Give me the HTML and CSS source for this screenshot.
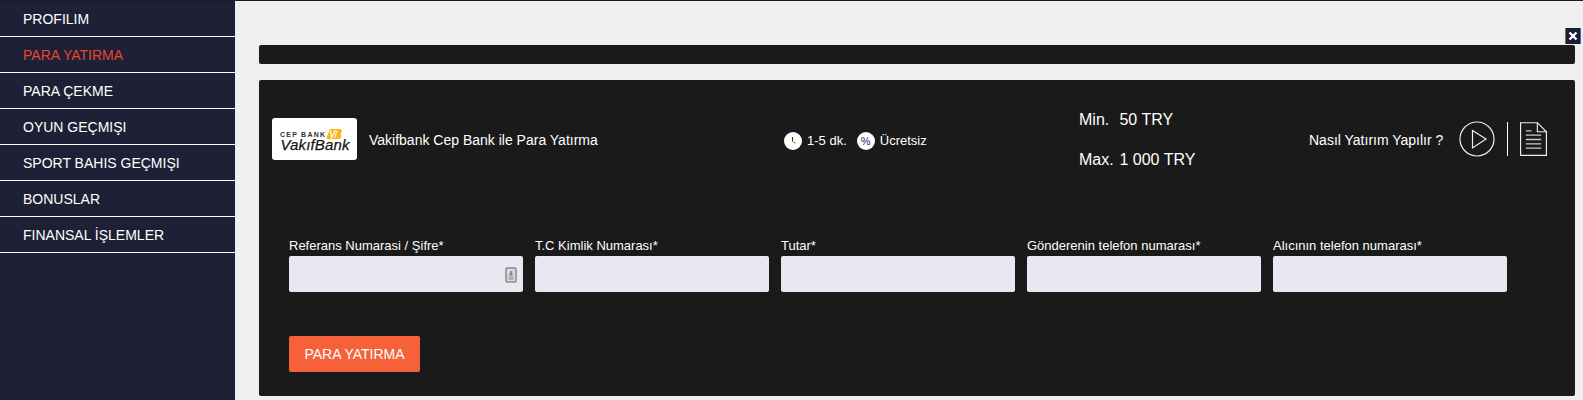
FILE: index.html
```html
<!DOCTYPE html>
<html lang="tr">
<head>
<meta charset="utf-8">
<title>Para Yatırma</title>
<link rel="stylesheet" href="styles.css">
</head>
<body>
<div class="layout">
  <nav class="sidebar">
    <a class="nav-item">PROFILIM</a>
    <a class="nav-item active">PARA YATIRMA</a>
    <a class="nav-item">PARA ÇEKME</a>
    <a class="nav-item">OYUN GEÇMIŞI</a>
    <a class="nav-item">SPORT BAHIS GEÇMIŞI</a>
    <a class="nav-item">BONUSLAR</a>
    <a class="nav-item">FINANSAL İŞLEMLER</a>
  </nav>
  <main class="content">
    <div class="close-btn">
      <svg viewBox="0 0 14 16" width="14" height="16"><path d="M3.500 4.500l7 7M10.500 4.500l-7 7" stroke="#fff" stroke-width="2.400" fill="none"/></svg>
    </div>
    <div class="strip"></div>
    <section class="panel">
      <header class="method">
        <div class="logo">
          <svg viewBox="0 0 85 42" width="85" height="42">
            <text x="8" y="19" class="logo-cep" textLength="45">CEP BANK</text>
            <path d="M54 21L58 11H69L70 13.500L68.500 16L69.500 18L68 21Z" fill="#f6b81a"/>
            <path d="M58.500 12.500L59.500 19.500L63.500 12" stroke="#fff" stroke-width="1.200" fill="none"/>
            <path d="M65 12.500L62.500 20" stroke="#fff" stroke-width="1" fill="none"/>
            <text x="8.500" y="32" class="logo-name" textLength="69">VakıfBank</text>
          </svg>
        </div>
        <div class="method-name">Vakifbank Cep Bank ile Para Yatırma</div>
        <div class="badges">
          <svg class="badge-icon" viewBox="0 0 18 18" width="18" height="18"><circle cx="9" cy="9" r="9" fill="#fff"/><path d="M8.500 5v4.500" stroke="#33302a" stroke-width="1.100" fill="none"/><path d="M8.500 9.500l3 2" stroke="#d99a2b" stroke-width="1.100" fill="none"/></svg>
          <span class="badge-text">1-5 dk.</span>
          <span class="badge-icon percent">%</span>
          <span class="badge-text">Ücretsiz</span>
        </div>
        <div class="limits">
          <div class="limit"><span class="limit-key">Min.</span> 50 TRY</div>
          <div class="limit"><span class="limit-key">Max.</span> 1 000 TRY</div>
        </div>
        <div class="help">
          <span class="help-text">Nasıl Yatırım Yapılır ?</span>
          <svg class="play" viewBox="0 0 36 36" width="36" height="36"><circle cx="18" cy="18" r="17" stroke="#eee" stroke-width="1.200" fill="none"/><path d="M13.500 9.500L27 18L13.500 27Z" stroke="#eee" stroke-width="1.200" fill="none"/></svg>
          <span class="help-sep"></span>
          <svg class="doc" viewBox="0 0 28 35" width="27" height="34"><path d="M.6.6H18L27.400 10V34.400H.6Z" stroke="#eee" stroke-width="1.200" fill="none"/><path d="M18 .6V10H27.400" stroke="#eee" stroke-width="1.200" fill="none"/><path d="M6 9H12M6 13.500H22M6 18H22M6 22.500H22M6 27H22" stroke="#ccc" stroke-width="1.400" fill="none"/></svg>
        </div>
      </header>
      <form class="form">
        <div class="fields">
          <label class="field"><span class="field-label">Referans Numarasi / Şifre*</span>
            <span class="input input-key"><svg class="key-icon" viewBox="0 0 12 16" width="12" height="16"><rect x="1" y="1" width="10" height="14" rx="1" stroke="#8a8a8a" stroke-width="1.500" fill="#d8d8de"/><path d="M6 4l1.500 4h-3ZM3.500 10h5M3.500 12h5" stroke="#8a8a8a" fill="#8a8a8a"/></svg></span>
          </label>
          <label class="field"><span class="field-label">T.C Kimlik Numarası*</span><span class="input"></span></label>
          <label class="field"><span class="field-label">Tutar*</span><span class="input"></span></label>
          <label class="field"><span class="field-label">Gönderenin telefon numarası*</span><span class="input"></span></label>
          <label class="field"><span class="field-label">Alıcının telefon numarası*</span><span class="input"></span></label>
        </div>
        <button class="submit" type="button">PARA YATIRMA</button>
      </form>
    </section>
  </main>
</div>
</body>
</html>
```
FILE: styles.css
```css
* { box-sizing: border-box; }
html, body { margin: 0; height: 100%; overflow: hidden; }
body { font-family: "Liberation Sans", Arial, sans-serif; background: #efefef; color: #fff; font-size: 14px; }
.layout { display: flex; height: 400px; border-top: 1px solid #1a1a2a; }
.sidebar { width: 235px; flex: none; background: #1e2035; }
.nav-item { display: block; height: 36px; padding-left: 23px; line-height: 36px; font-size: 14px; color: #fff; border-bottom: 1px solid #fff; }
.nav-item.active { color: #ea452f; }
.content { flex: 1; position: relative; padding: 44px 8px 0 24px; }
.close-btn { position: absolute; top: 27px; right: 2px; width: 16px; height: 16px; background: #1a1d33; display: flex; border-left: 1px solid #8a6a50; border-right: 1px solid #2a6cc0; }
.strip { height: 19px; background: #1a1a1a; border-radius: 2px; }
.panel { margin-top: 16px; height: 316px; background: #1a1a1a; border-radius: 2px; padding: 38px 13px 0; }
.method { display: flex; align-items: center; height: 42px; }
.logo { width: 85px; height: 42px; background: #fff; border-radius: 3px; flex: none; }
.logo-cep { font-size: 7px; fill: #333; font-family: "Liberation Sans", sans-serif; font-weight: 700; }
.logo-name { font-size: 15px; font-style: italic; fill: #151515; stroke: #151515; stroke-width: .25px; font-family: "Liberation Sans", sans-serif; }
.method-name { margin-left: 12px; width: 415px; font-size: 14px; flex: none; padding-top: 2px; }
.badges { display: flex; align-items: center; width: 295px; flex: none; padding-top: 3px; }
.badge-icon { flex: none; width: 18px; height: 18px; }
.percent { background: #fff; border-radius: 50%; color: #1a2a55; font-size: 11px; text-align: center; line-height: 18px; }
.badge-text { font-size: 13px; margin: 0 10px 0 5px; }
.limits { width: 230px; flex: none; font-size: 16px; display: flex; flex-direction: column; gap: 22px; padding-top: 2px; }
.limit { white-space: pre; }
.limit-key { display: inline-block; width: 36px; }
.help { display: flex; align-items: center; }
.help-text { font-size: 14px; margin-right: 16px; padding-top: 2px; }
.help-sep { width: 1px; height: 34px; background: #fff; margin: 0 12px; }
.play, .doc { flex: none; }
.form { padding: 0 17px; margin-top: 78px; }
.fields { display: flex; gap: 12px; }
.field { width: 234px; flex: none; display: block; }
.field-label { display: block; font-size: 13px; line-height: 16px; height: 18px; }
.input { display: block; height: 36px; background: #e8e8f2; border-radius: 2px; position: relative; }
.input-key .key-icon { position: absolute; right: 6px; top: 11px; }
.submit { display: block; margin-top: 44px; width: 131px; height: 36px; background: #f6613a; color: #fff; border: 0; border-radius: 2px; font: 14px "Liberation Sans", Arial, sans-serif; padding: 0; }
```
